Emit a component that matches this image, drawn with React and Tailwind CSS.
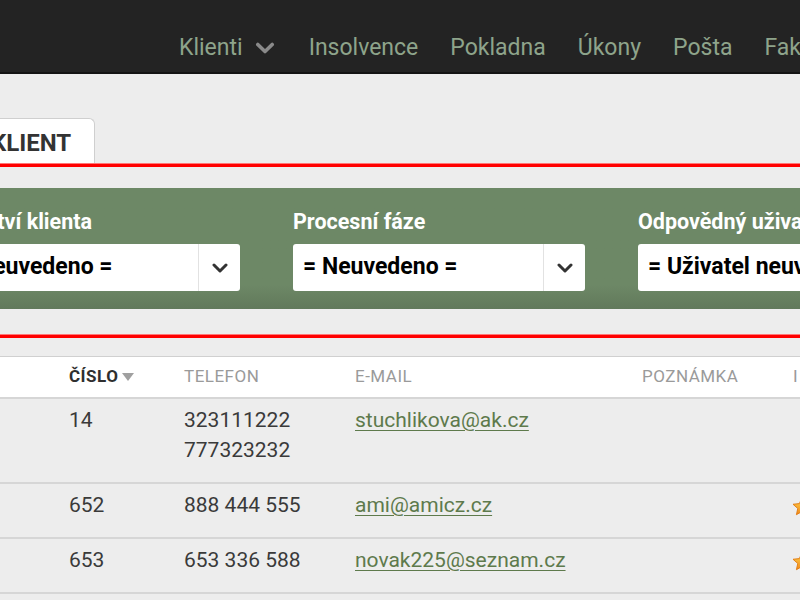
import React from "react";

function Chevron({ className }) {
  return (
    <svg viewBox="0 0 16 10" className={className} fill="none">
      <path d="M2 2l6 6 6-6" stroke="currentColor" strokeWidth="3" strokeLinecap="round" strokeLinejoin="round" />
    </svg>
  );
}

function Star() {
  return (
    <svg viewBox="0 0 24 24" className="w-[22px] h-[22px]">
      <defs>
        <linearGradient id="starFill" x1="0" y1="0" x2="0" y2="1">
          <stop offset="0" stopColor="#ffd54a" />
          <stop offset="1" stopColor="#f08a1c" />
        </linearGradient>
      </defs>
      <path
        d="M12 2l2.9 6.3 6.9.7-5.2 4.6 1.5 6.8L12 16.9 5.9 20.4l1.5-6.8L2.2 9l6.9-.7z"
        fill="url(#starFill)"
        stroke="#e07a10"
        strokeWidth="1"
        strokeLinejoin="round"
      />
    </svg>
  );
}

function Select({ label, value }) {
  return (
    <div className="w-[292px] shrink-0 flex flex-col">
      <div className="text-[21.5px] font-bold text-white leading-[24px] h-[24px] whitespace-nowrap">{label}</div>
      <div className="mt-[10px] h-[47px] bg-white rounded-[3px] flex items-stretch overflow-hidden">
        <div className="flex-1 flex items-center pl-[10px] text-[23px] font-bold text-black whitespace-nowrap overflow-hidden">
          {value}
        </div>
        <div className="w-[42px] border-l border-[#e2e2e2] flex items-center justify-center text-[#333]">
          <Chevron className="w-[16px] h-[10px]" />
        </div>
      </div>
    </div>
  );
}

const navItems = ["Insolvence", "Pokladna", "Úkony", "Pošta", "Faktury"];

const rows = [
  { num: "14", phones: ["323111222", "777323232"], email: "stuchlikova@ak.cz", star: false },
  { num: "652", phones: ["888 444 555"], email: "ami@amicz.cz", star: true },
  { num: "653", phones: ["653 336 588"], email: "novak225@seznam.cz", star: true },
];

export default function App() {
  return (
    <div className="w-[800px] h-[600px] overflow-hidden bg-[#ededed] font-['Roboto',sans-serif]">
      {/* top navigation */}
      <header className="h-[74px] bg-[#232323] border-b-2 border-[#141414] flex items-end pb-[7px] pl-[179px] gap-[32px] text-[23px] text-[#8ea48b] whitespace-nowrap">
        <div className="flex items-center gap-[12px] mr-[2px]">
          <span>Klienti</span>
          <Chevron className="w-[20px] h-[12px] text-[#8a8a8a]" />
        </div>
        {navItems.map((n) => (
          <span key={n}>{n}</span>
        ))}
      </header>

      <main className="ml-[-60px] w-[900px]">
        {/* tabs */}
        <div className="pt-[44px] flex">
          <div className="h-[45px] ml-[-20px] pl-[70px] pr-[23px] pt-[3px] bg-white border border-b-0 border-[#cfcfcf] rounded-tr-[6px] flex items-center text-[24px] font-bold text-[#333]">
            KLIENT
          </div>
        </div>
        <div className="h-[4px] bg-[#ff0000] border-t border-[#ff7777]" />

        {/* filters */}
        <div className="mt-[21px] h-[121px] bg-gradient-to-b from-[#6d8866] from-80% to-[#61795b] flex gap-[53px] pl-[8px] pt-[22px]">
          <Select label="Odvětví klienta" value="= Neuvedeno =" />
          <Select label="Procesní fáze" value="= Neuvedeno =" />
          <Select label="Odpovědný uživatel" value="= Uživatel neuveden =" />
        </div>

        <div className="mt-[25px] h-[4px] bg-[#ff0000] border-t border-[#ff7777]" />

        {/* client table */}
        <div className="mt-[18px] border-t border-[#d0d0d0]">
          <div className="h-[42px] bg-white border-b-2 border-[#d6d6d6] grid grid-cols-[129px_115px_171px_287px_151px_1fr] items-center text-[17px] tracking-[0.5px] text-[#9a9a9a] whitespace-nowrap">
            <div />
            <div className="flex items-center gap-[4px] font-bold text-[#2f2f2f]">
              ČÍSLO
              <svg viewBox="0 0 12 8" className="w-[12px] h-[8px]"><path d="M0 0h12L6 8z" fill="#a0a0a0" /></svg>
            </div>
            <div>TELEFON</div>
            <div>E-MAIL</div>
            <div>POZNÁMKA</div>
            <div>I</div>
          </div>
          {rows.map((r) => (
            <div
              key={r.num}
              className="grid grid-cols-[129px_115px_171px_287px_151px_1fr] pt-[6px] pb-[17px] border-b-2 border-[#d6d6d6] text-[21px] leading-[30px] text-[#3a3a3a] whitespace-nowrap"
            >
              <div />
              <div>{r.num}</div>
              <div className="flex flex-col">
                {r.phones.map((p) => (
                  <span key={p}>{p}</span>
                ))}
              </div>
              <div>
                <span className="text-[#5e7a4c] underline underline-offset-[3px] decoration-[1px]">{r.email}</span>
              </div>
              <div />
              <div className="flex items-center h-[30px] pt-[4px] -ml-[2px]">{r.star ? <Star /> : null}</div>
            </div>
          ))}
        </div>
      </main>
    </div>
  );
}
